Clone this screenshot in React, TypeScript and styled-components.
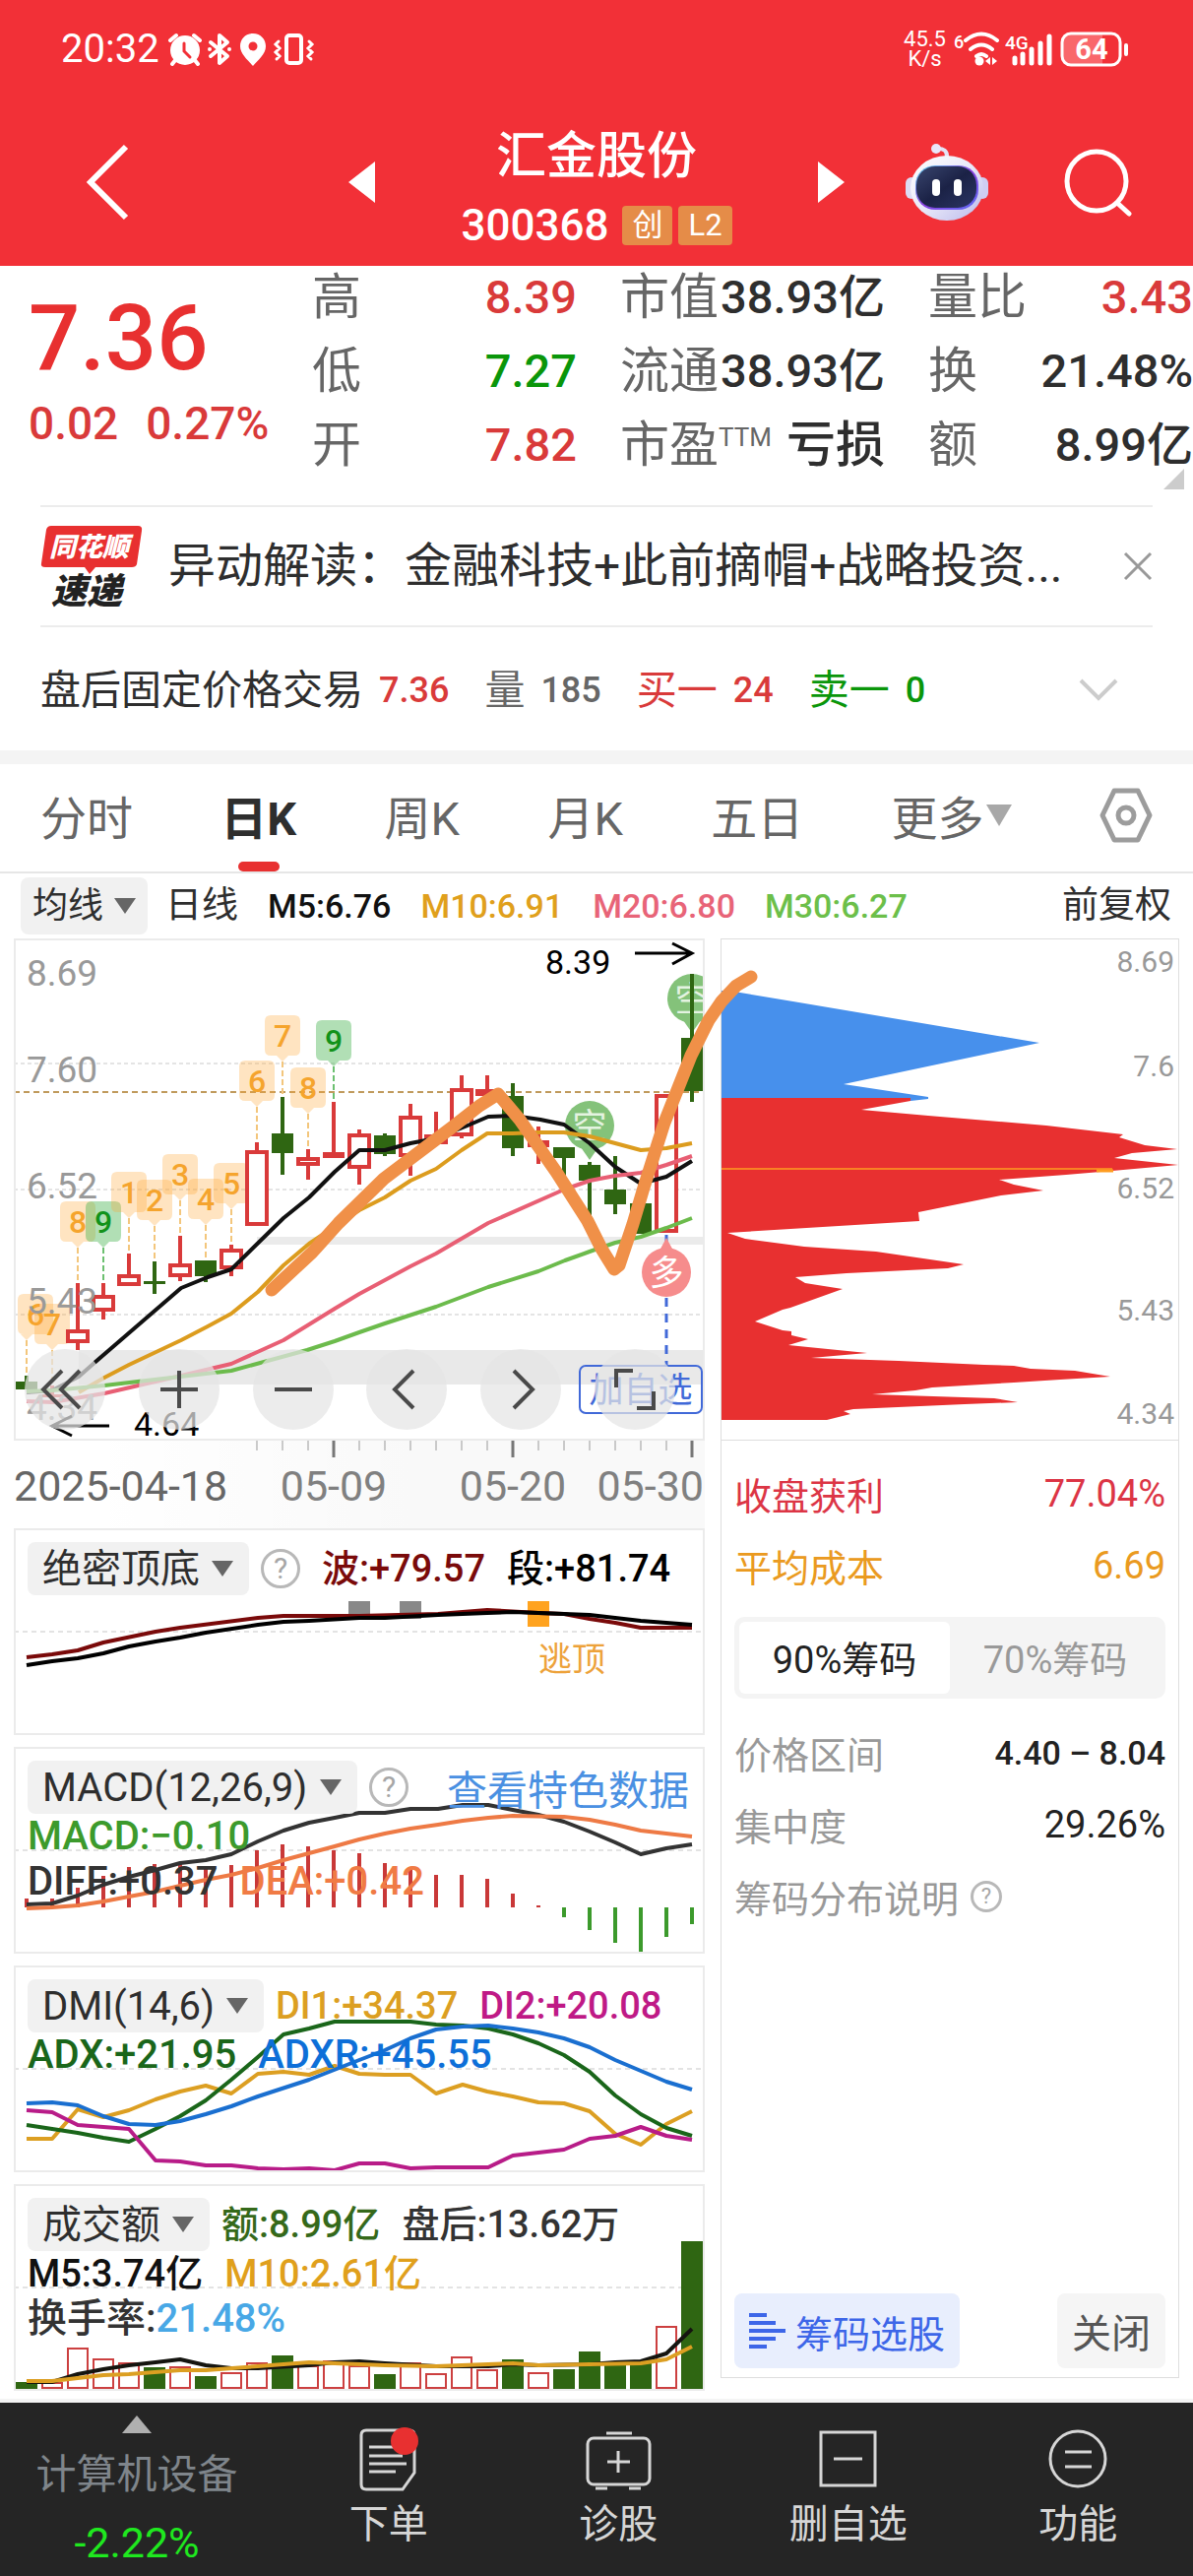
import React, { useState } from 'react';
import styled, { createGlobalStyle } from 'styled-components';

const FONT = "Roboto, 'Noto Sans CJK SC', sans-serif";
const INK = '#2e2e2e';
const GREY = '#666666';
const MUTED = '#999999';
const RED = '#d93a3a';
const GREEN = '#0a960a';
const BAR_GREEN = '#2f6612';

const GlobalStyle = createGlobalStyle`
  *, *::before, *::after { box-sizing: border-box; }
  body { margin: 0; background: #ffffff; font-family: ${FONT}; color: ${INK}; }
  button, select { font: inherit; color: inherit; background: none; border: 0; margin: 0; padding: 0; cursor: pointer; }
  svg { display: block; flex: none; }
  p, h1, h2 { margin: 0; }
`;

const Page = styled.div`
  display: flex;
  flex-direction: column;
  min-width: 1100px;
  white-space: nowrap;
`;

/* ---------- header ---------- */

const Header = styled.header`
  background: #f23037;
  color: #ffffff;
`;

const StatusBar = styled.div`
  display: flex;
  justify-content: space-between;
  align-items: center;
  height: 100px;
  padding: 0 66px 0 62px;
`;

const StatusGroup = styled.div`
  display: flex;
  align-items: center;
  gap: 8px;
`;

const Clock = styled.span`
  font-size: 40px;
  line-height: 44px;
`;

const NetSpeed = styled.span`
  display: flex;
  flex-direction: column;
  align-items: center;
  font-size: 22px;
  line-height: 20px;
`;

const NavBar = styled.nav`
  display: grid;
  grid-template-columns: 1fr 504px 1fr;
  align-items: center;
  height: 170px;
`;

const NavLeft = styled.div`
  display: flex;
  padding-left: 86px;
`;

const NavRight = styled.div`
  display: flex;
  align-items: center;
  justify-content: flex-end;
  gap: 76px;
  padding-right: 62px;
`;

const NavCenter = styled.div`
  display: flex;
  align-items: center;
  justify-content: space-between;
`;

const TitleBlock = styled.div`
  display: flex;
  flex-direction: column;
  align-items: center;
  gap: 18px;
  padding-top: 10px;
`;

const Title = styled.h1`
  font-size: 51px;
  font-weight: 500;
  line-height: 60px;
`;

const CodeRow = styled.div`
  display: flex;
  align-items: center;
  gap: 6px;
`;

const Code = styled.span`
  margin-right: 8px;
  font-size: 44px;
  font-weight: 500;
  line-height: 44px;
`;

const Badge = styled.span`
  padding: 0 10px;
  border-radius: 4px;
  background: #e58c48;
  font-size: 31px;
  line-height: 40px;
`;

/* ---------- quote ---------- */

const Quote = styled.section`
  position: relative;
  display: grid;
  grid-template-columns: 273px 1fr 1fr 1fr;
  column-gap: 44px;
  height: 243px;
  padding-top: 2px;
`;

const PriceBlock = styled.div`
  padding: 22px 0 0 29px;
  color: ${RED};
`;

const Price = styled.p`
  color: #e83030;
  font-size: 92px;
  font-weight: 500;
  line-height: 100px;
`;

const Change = styled.p`
  display: flex;
  gap: 28px;
  margin-top: 4px;
  font-size: 46px;
  font-weight: 500;
  line-height: 64px;
`;

const StatColumn = styled.div`
  display: flex;
  flex-direction: column;
  gap: 15px;
`;

const Stat = styled.div`
  display: flex;
  justify-content: space-between;
  height: 60px;
  font-size: 50px;
  line-height: 60px;
`;

const StatLabel = styled.span`
  color: ${GREY};
  sup { font-size: 26px; line-height: 20px; vertical-align: 16px; }
`;

const StatValue = styled.span<{ $color?: string; $cjk?: boolean }>`
  color: ${(p) => p.$color || INK};
  font-size: ${(p) => (p.$cjk ? 50 : 47)}px;
  font-weight: 500;
`;

const Corner = styled.span`
  position: absolute;
  right: 9px;
  bottom: 16px;
  border-left: 21px solid transparent;
  border-bottom: 21px solid #cccccc;
`;

const News = styled.section`
  display: flex;
  align-items: center;
  height: 124px;
  margin: 0 41px;
  border-top: 2px solid #ececec;
  border-bottom: 2px solid #ececec;
`;

const NewsLink = styled.a`
  flex: 1;
  margin-left: 26px;
  color: ${INK};
  font-size: 48px;
  line-height: 60px;
  text-decoration: none;
`;

const AfterHours = styled.section`
  display: flex;
  align-items: center;
  gap: 36px;
  height: 125px;
  padding: 2px 76px 0 41px;
  font-size: 41px;
  line-height: 60px;
  svg { margin-left: auto; }
`;

const Pair = styled.span<{ $color?: string }>`
  display: flex;
  gap: 16px;
  color: ${(p) => p.$color || INK};
`;

const Num = styled.span<{ $color?: string }>`
  color: ${(p) => p.$color || 'inherit'};
  font-size: 36px;
  font-weight: 500;
`;

const Band = styled.div<{ $height: number }>`
  height: ${(p) => p.$height}px;
  background: #f4f4f4;
`;

/* ---------- tabs ---------- */

const Tabs = styled.div`
  display: flex;
  justify-content: space-between;
  align-items: stretch;
  height: 111px;
  padding: 0 41px;
  border-bottom: 2px solid #e6e6e6;
`;

const Tab = styled.button<{ $active?: boolean }>`
  position: relative;
  display: flex;
  align-items: center;
  gap: 2px;
  padding-bottom: 6px;
  color: ${(p) => (p.$active ? INK : GREY)};
  font-size: 47px;
  font-weight: ${(p) => (p.$active ? 700 : 400)};
  &::after {
    content: '';
    display: ${(p) => (p.$active ? 'block' : 'none')};
    position: absolute;
    bottom: 0;
    left: 50%;
    width: 42px;
    height: 10px;
    margin-left: -21px;
    border-radius: 5px;
    background: #e83030;
  }
`;

const Averages = styled.div`
  display: flex;
  align-items: center;
  gap: 30px;
  height: 66px;
  padding: 0 22px 0 21px;
  font-size: 37px;
  line-height: 58px;
`;

const Average = styled.span<{ $color: string }>`
  color: ${(p) => p.$color};
  font-size: 34px;
  font-weight: 500;
`;

const Lead = styled.span`
  display: flex;
  gap: 18px;
`;

const Restore = styled.button`
  margin-left: auto;
`;

const Picker = styled.label<{ $small?: boolean }>`
  display: flex;
  align-items: center;
  gap: ${(p) => (p.$small ? 10 : 12)}px;
  height: ${(p) => (p.$small ? 58 : 54)}px;
  padding: ${(p) => (p.$small ? '0 12px' : '0 16px 0 15px')};
  border-radius: 8px;
  background: #f1f1f1;
  color: ${INK};
  font-size: ${(p) => (p.$small ? 36 : 40)}px;
  select { appearance: none; }
`;

/* ---------- charts ---------- */

const ChartArea = styled.main`
  position: relative;
  display: grid;
  grid-template-columns: 702fr 466fr;
  gap: 16px;
  padding: 0 14px 8px;
`;

const Stroke = styled.svg`
  position: absolute;
  top: 0;
  left: 0;
  width: 100%;
  height: auto;
  pointer-events: none;
`;

const LeftColumn = styled.div`
  display: flex;
  flex-direction: column;
  min-width: 0;
`;

const Frame = styled.section`
  display: grid;
  border: 2px solid #ebebeb;
  margin-bottom: 12px;
  > * { grid-area: 1 / 1; min-width: 0; }
  &:last-child { margin-bottom: 0; }
`;

const MainFrame = styled(Frame)`
  margin-bottom: 0;
`;

const Plot = styled.svg`
  width: 100%;
  height: auto;
  font-family: ${FONT};
`;

const Toolbar = styled.div`
  position: relative;
  align-self: end;
  display: flex;
  justify-content: space-between;
  padding: 0 28px 9px 9px;
`;

const RoundButton = styled.button`
  display: flex;
  align-items: center;
  justify-content: center;
  width: 82px;
  height: 82px;
  border-radius: 50%;
  background: rgba(229, 229, 229, 0.72);
`;

const Readout = styled.div`
  position: relative;
  padding: 12px 0 0 12px;
`;

const ReadoutHead = styled.div`
  display: flex;
  align-items: center;
  gap: 12px;
  height: 54px;
`;

const Values = styled.div<{ $gap: number; $size?: number }>`
  display: flex;
  gap: ${(p) => p.$gap}px;
  font-size: ${(p) => p.$size || 38}px;
  line-height: 46px;
`;

const Value = styled.span<{ $color: string }>`
  color: ${(p) => p.$color};
  font-weight: 500;
`;

const DataLink = styled.a`
  margin: 0 14px 0 auto;
  color: #4a90e2;
  font-size: 41px;
  text-decoration: none;
`;

const Help = styled.button<{ $size: number }>`
  width: ${(p) => p.$size}px;
  height: ${(p) => p.$size}px;
  margin-right: ${(p) => (p.$size > 36 ? 10 : 0)}px;
  border: 3px solid #b8b8b8;
  border-radius: 50%;
  color: #a6a6a6;
  font-size: ${(p) => (p.$size > 36 ? 30 : 22)}px;
  line-height: 1;
`;

/* ---------- chips ---------- */

const ChipPanel = styled.section`
  display: flex;
  flex-direction: column;
  margin-bottom: 13px;
  border: 1px solid #dedede;
`;

const ChipPlot = styled(Plot)`
  border-bottom: 1px solid #dedede;
`;

const ChipBody = styled.div`
  display: flex;
  flex-direction: column;
  flex: 1;
  padding: 17px 13px 9px;
`;

const ChipRow = styled.div<{ $color?: string }>`
  display: flex;
  align-items: center;
  justify-content: space-between;
  height: 73px;
  color: ${(p) => p.$color || MUTED};
  font-size: 38px;
`;

const ChipValue = styled.span<{ $strong?: boolean; $color?: string }>`
  color: ${(p) => p.$color || 'inherit'};
  font-size: ${(p) => (p.$strong ? 34 : 38)}px;
  font-weight: ${(p) => (p.$strong ? 500 : 400)};
`;

const ChipNote = styled.div`
  display: flex;
  align-items: center;
  gap: 12px;
  height: 73px;
  color: ${MUTED};
  font-size: 38px;
`;

const Segments = styled.div`
  display: grid;
  grid-template-columns: 1fr 1fr;
  height: 83px;
  margin: 16px 0 18px;
  padding: 5px;
  border-radius: 10px;
  background: #f4f4f4;
`;

const Segment = styled.button<{ $active: boolean }>`
  padding-bottom: 3px;
  border-radius: 6px;
  background: ${(p) => (p.$active ? '#ffffff' : 'transparent')};
  color: ${(p) => (p.$active ? '#222222' : MUTED)};
  font-size: 38px;
`;

const ChipFooter = styled.div`
  display: flex;
  justify-content: space-between;
  margin-top: auto;
`;

const FooterButton = styled.button<{ $primary?: boolean }>`
  display: flex;
  align-items: center;
  gap: 10px;
  height: 76px;
  padding: 0 15px;
  border-radius: 8px;
  background: ${(p) => (p.$primary ? '#e8eefd' : '#f5f5f5')};
  color: ${(p) => (p.$primary ? '#3d66e8' : '#555555')};
  font-size: ${(p) => (p.$primary ? 38 : 40)}px;
`;

/* ---------- bottom bar ---------- */

const BottomBar = styled.nav`
  display: grid;
  grid-template-columns: 278px repeat(4, 1fr);
  height: 176px;
  background: #252525;
`;

const IndexLink = styled.a`
  display: flex;
  flex-direction: column;
  align-items: center;
  padding-top: 13px;
  color: #7f858b;
  font-size: 41px;
  line-height: 60px;
  text-decoration: none;
`;

const IndexName = styled.span`
  margin-top: 12px;
`;

const IndexChange = styled.span`
  margin-top: 9px;
  color: #1fe81f;
  font-size: 43px;
`;

const NavItem = styled.button`
  display: flex;
  flex-direction: column;
  align-items: center;
  padding-top: 20px;
  color: #d6d6d6;
  font-size: 40px;
  line-height: 60px;
`;

/* ---------- drawing data ---------- */

type Pt = [number, number];
const line = (pts: Pt[]) => pts.map((p) => p.join(',')).join(' ');
const cx = (i: number) => 27 + i * 26;

// index, bar top, bar bottom, wick top, wick bottom, kind
type Candle = [number, number, number, number, number, 'r' | 'g' | 's'];
const candles: Candle[] = [
  [0, 1403, 1411, 1397, 1411, 'g'],
  [1, 1416, 1419, 1407, 1426, 's'],
  [2, 1350, 1364, 1303, 1371, 'r'],
  [3, 1315, 1332, 1303, 1340, 'r'],
  [4, 1294, 1306, 1273, 1306, 'r'],
  [5, 1301, 1304, 1281, 1314, 'g'],
  [6, 1283, 1297, 1255, 1301, 'r'],
  [7, 1280, 1296, 1280, 1302, 'g'],
  [8, 1268, 1289, 1264, 1296, 'r'],
  [9, 1168, 1245, 1160, 1245, 'r'],
  [10, 1151, 1171, 1114, 1193, 'g'],
  [11, 1175, 1184, 1167, 1198, 'r'],
  [12, 1170, 1176, 1119, 1176, 's'],
  [13, 1151, 1187, 1147, 1203, 'r'],
  [14, 1153, 1172, 1151, 1174, 'g'],
  [15, 1133, 1175, 1121, 1194, 'r'],
  [16, 1152, 1162, 1129, 1162, 'r'],
  [17, 1105, 1154, 1092, 1156, 'r'],
  [18, 1106, 1113, 1092, 1113, 'r'],
  [19, 1113, 1166, 1100, 1174, 'g'],
  [20, 1158, 1165, 1144, 1182, 's'],
  [21, 1165, 1176, 1165, 1196, 'g'],
  [22, 1183, 1199, 1180, 1240, 'g'],
  [23, 1208, 1223, 1174, 1233, 'g'],
  [24, 1222, 1253, 1222, 1253, 'g'],
  [25, 1111, 1252, 1111, 1252, 'r'],
  [26, 1054, 1108, 989, 1119, 'g'],
];

// index, label, high it points to, green?
const tags: [number, string, number, boolean][] = [
  [0, '6', 1397, false],
  [1, '7', 1407, false],
  [2, '8', 1303, false],
  [3, '9', 1303, true],
  [4, '1', 1273, false],
  [5, '2', 1281, false],
  [6, '3', 1255, false],
  [7, '4', 1280, false],
  [8, '5', 1264, false],
  [9, '6', 1160, false],
  [10, '7', 1114, false],
  [11, '8', 1167, false],
  [12, '9', 1119, true],
];

const ma5: Pt[] = [[27, 1414], [53, 1412], [80, 1398], [97, 1383], [184, 1308], [211, 1297], [235, 1289], [288, 1237], [314, 1216], [340, 1190], [365, 1168], [391, 1168], [417, 1161], [443, 1156], [475, 1143], [496, 1134], [521, 1133], [549, 1137], [573, 1142], [599, 1161], [625, 1185], [651, 1202], [677, 1195], [703, 1179]];
const ma10: Pt[] = [[80, 1414], [106, 1399], [131, 1386], [184, 1361], [211, 1347], [235, 1334], [262, 1312], [288, 1285], [314, 1263], [365, 1229], [391, 1216], [417, 1199], [443, 1187], [469, 1168], [495, 1151], [521, 1151], [547, 1150], [573, 1150], [599, 1154], [625, 1161], [651, 1168], [677, 1166], [703, 1161]];
const ma20: Pt[] = [[27, 1423], [53, 1424], [106, 1415], [184, 1397], [235, 1385], [288, 1361], [340, 1329], [365, 1314], [417, 1286], [443, 1273], [496, 1242], [573, 1208], [599, 1199], [625, 1194], [651, 1191], [677, 1183], [703, 1174]];
const ma30: Pt[] = [[27, 1413], [53, 1412], [106, 1407], [140, 1403], [235, 1392], [312, 1371], [340, 1362], [365, 1353], [391, 1344], [443, 1327], [496, 1307], [547, 1291], [574, 1280], [599, 1271], [625, 1262], [651, 1256], [677, 1247], [703, 1237]];

const waveRed: Pt[] = [[27, 1683], [53, 1680], [79, 1676], [105, 1668], [158, 1657], [183, 1653], [262, 1643], [288, 1641], [365, 1641], [445, 1639], [495, 1635], [547, 1638], [573, 1639], [599, 1644], [625, 1648], [651, 1653], [703, 1653]];
const waveBlack: Pt[] = [[27, 1691], [53, 1687], [79, 1684], [105, 1679], [131, 1672], [158, 1667], [183, 1663], [209, 1658], [262, 1650], [288, 1647], [314, 1646], [365, 1643], [391, 1643], [445, 1640], [495, 1638], [521, 1637], [573, 1639], [599, 1640], [625, 1643], [651, 1646], [703, 1650]];

const macdBars = [1928, 1928, 1917, 1905, 1896, 1893, 1893, 1897, 1894, 1879, 1873, 1875, 1879, 1882, 1892, 1896, 1904, 1904, 1908, 1923, 1935, 1947, 1960, 1973, 1983, 1967, 1954];
const diff: Pt[] = [[27, 1934], [53, 1933], [79, 1925], [105, 1914], [131, 1906], [158, 1899], [183, 1892], [209, 1889], [235, 1883], [262, 1870], [288, 1859], [314, 1851], [340, 1846], [365, 1841], [391, 1841], [417, 1837], [445, 1837], [470, 1833], [496, 1833], [521, 1838], [547, 1843], [573, 1850], [599, 1860], [625, 1871], [651, 1883], [677, 1877], [703, 1873]];
const dea: Pt[] = [[27, 1938], [53, 1937], [79, 1935], [105, 1931], [131, 1926], [158, 1921], [183, 1915], [209, 1909], [235, 1904], [262, 1897], [288, 1889], [314, 1882], [340, 1875], [365, 1868], [391, 1862], [417, 1857], [445, 1853], [470, 1849], [496, 1846], [521, 1844], [573, 1845], [599, 1848], [625, 1853], [651, 1859], [703, 1865]];

const di1: Pt[] = [[27, 2172], [53, 2172], [79, 2142], [105, 2150], [131, 2143], [158, 2132], [183, 2124], [209, 2118], [235, 2126], [262, 2106], [288, 2104], [314, 2107], [340, 2098], [365, 2106], [391, 2107], [417, 2107], [443, 2126], [470, 2117], [495, 2124], [521, 2129], [547, 2135], [573, 2136], [599, 2144], [625, 2167], [651, 2178], [677, 2157], [703, 2144]];
const di2: Pt[] = [[27, 2143], [53, 2145], [79, 2158], [105, 2160], [131, 2162], [158, 2194], [183, 2195], [209, 2199], [235, 2199], [262, 2202], [288, 2203], [314, 2202], [340, 2204], [365, 2197], [391, 2197], [417, 2202], [443, 2201], [496, 2201], [521, 2189], [547, 2186], [573, 2183], [599, 2172], [625, 2169], [651, 2160], [677, 2169], [703, 2173]];
const adx: Pt[] = [[27, 2158], [53, 2162], [79, 2166], [105, 2171], [131, 2175], [158, 2162], [183, 2149], [209, 2133], [235, 2112], [262, 2089], [288, 2066], [314, 2060], [340, 2053], [417, 2053], [443, 2056], [470, 2057], [496, 2060], [521, 2066], [547, 2075], [573, 2087], [599, 2104], [625, 2128], [651, 2147], [677, 2161], [703, 2169]];
const adxr: Pt[] = [[27, 2136], [53, 2135], [79, 2138], [105, 2149], [131, 2157], [158, 2158], [183, 2154], [209, 2147], [235, 2139], [262, 2129], [314, 2112], [365, 2092], [391, 2082], [417, 2070], [443, 2061], [470, 2058], [496, 2057], [521, 2060], [547, 2064], [573, 2070], [599, 2079], [625, 2092], [651, 2103], [677, 2114], [703, 2122]];

const volumes: [number, 'r' | 'g'][] = [[2419, 'g'], [2419, 'r'], [2384, 'r'], [2395, 'r'], [2399, 'r'], [2404, 'g'], [2403, 'r'], [2413, 'g'], [2409, 'r'], [2399, 'r'], [2392, 'g'], [2402, 'r'], [2397, 'r'], [2402, 'r'], [2411, 'g'], [2399, 'r'], [2410, 'r'], [2393, 'r'], [2406, 'r'], [2396, 'g'], [2409, 'r'], [2406, 'g'], [2388, 'g'], [2400, 'g'], [2400, 'g'], [2362, 'r'], [2276, 'g']];
const vol5: Pt[] = [[27, 2419], [53, 2419], [79, 2411], [105, 2406], [131, 2402], [158, 2399], [183, 2396], [209, 2402], [235, 2405], [262, 2405], [314, 2402], [340, 2399], [365, 2398], [391, 2400], [443, 2403], [496, 2403], [521, 2401], [547, 2402], [599, 2401], [625, 2399], [651, 2398], [677, 2390], [703, 2365]];
const vol10: Pt[] = [[27, 2418], [53, 2418], [105, 2412], [131, 2411], [183, 2407], [209, 2407], [262, 2403], [314, 2399], [340, 2400], [391, 2402], [443, 2403], [496, 2401], [521, 2400], [547, 2402], [651, 2400], [677, 2396], [703, 2383]];

const profitChips: Pt[] = [[733, 1115], [925, 1115], [925, 1118], [875, 1127], [943, 1133], [1063, 1143], [1141, 1152], [1137, 1155], [1163, 1163], [1196, 1167], [1150, 1171], [1132, 1176], [1197, 1183], [1130, 1189], [1083, 1193], [1015, 1198], [1030, 1203], [1060, 1209], [1017, 1214], [933, 1231], [934, 1240], [739, 1252], [757, 1258], [817, 1266], [890, 1271], [979, 1284], [963, 1288], [860, 1293], [808, 1297], [818, 1303], [856, 1309], [803, 1328], [795, 1330], [767, 1342], [795, 1351], [804, 1352], [804, 1356], [821, 1360], [801, 1366], [881, 1374], [824, 1379], [913, 1382], [1000, 1386], [1030, 1387], [1047, 1390], [1092, 1392], [1128, 1398], [1077, 1401], [1030, 1404], [947, 1409], [930, 1412], [886, 1416], [1010, 1420], [1034, 1424], [980, 1426], [867, 1431], [857, 1433], [864, 1436], [840, 1442], [733, 1442]];
const lossChips: Pt[] = [[733, 1006], [752, 1008], [1056, 1059], [857, 1101], [943, 1114], [943, 1116], [925, 1118], [925, 1115], [733, 1115]];

/* ---------- small drawings ---------- */

const Caret = ({ color = '#666666', w = 22, h = 16 }: { color?: string; w?: number; h?: number }) => (
  <svg width={w} height={h} viewBox="0 0 22 16" preserveAspectRatio="none" aria-hidden="true">
    <path d="M0 0H22L11 16Z" fill={color} />
  </svg>
);

const StatusIcons = () => (
  <svg width="150" height="34" viewBox="0 0 150 34" aria-hidden="true">
    <g fill="none" stroke="#fff" strokeWidth="4" strokeLinecap="round">
      <circle cx="18" cy="18" r="13" fill="#fff" />
      <path d="M3 8 9 3M33 8 27 3M9 27 5 32M27 27 31 32" />
      <path d="M17 11V19L23 25" stroke="#f23037" strokeWidth="3" />
      <path d="M44 10 61 24 53 31V3L61 10 44 24M43 17H43M63 17H63" strokeWidth="4" strokeLinejoin="round" />
      <rect x="121" y="3" width="15" height="28" rx="3" />
      <path d="M113 9 110 12 114 16 110 20 114 24 111 27M144 9 147 12 143 16 147 20 143 24 146 27" strokeWidth="3" />
    </g>
    <path d="M87 1C79 1 74 7 74 14 74 22 82 28 87 34 92 28 100 22 100 14 100 7 95 1 87 1Z" fill="#fff" />
    <circle cx="87" cy="14" r="4.5" fill="#f23037" />
  </svg>
);

const SignalIcons = () => (
  <svg width="177" height="40" viewBox="0 -2 177 40" fontFamily="Roboto, sans-serif" fill="#fff" role="img" aria-label="信号与电量 64">
    <text x="0" y="17" fontSize="18" fontWeight="500">6</text>
    <g fill="none" stroke="#fff" strokeWidth="4" strokeLinecap="round">
      <path d="M12 9Q28-4 44 9M17 18Q28 9 39 18M23 25Q28 21 33 25" />
    </g>
    <circle cx="26" cy="30" r="4.5" />
    <path d="M32 30 37 26V34ZM39 26 44 30 39 34Z" />
    <text x="52" y="18" fontSize="19" fontWeight="500">4G</text>
    <g stroke="#fff" strokeWidth="5" strokeLinecap="round">
      <path d="M62 27V32M70 23V32M79 18V32M88 12V32M97 5V32" />
    </g>
    <path d="M118 3H151V34H118Q110 34 110 26V11Q110 3 118 3Z" fill="#f9676b" />
    <rect x="110" y="2" width="59" height="32" rx="9" fill="none" stroke="#fff" strokeWidth="3" />
    <path d="M175 14V23" stroke="#fff" strokeWidth="4" strokeLinecap="round" />
    <text x="140" y="28" fontSize="29" fontWeight="700" textAnchor="middle">64</text>
  </svg>
);

const Robot = () => (
  <svg width="84" height="78" viewBox="0 0 84 78" role="img" aria-label="智能助手">
    <defs>
      <linearGradient id="shell" x1="0" y1="0" x2="1" y2="1">
        <stop offset="0" stopColor="#ffffff" />
        <stop offset="0.5" stopColor="#e9e9f8" />
        <stop offset="1" stopColor="#b9b8ec" />
      </linearGradient>
      <linearGradient id="visor" x1="0" y1="0" x2="1" y2="1">
        <stop offset="0" stopColor="#5ad6e8" />
        <stop offset="0.5" stopColor="#8a3fe0" />
        <stop offset="1" stopColor="#5b6cf5" />
      </linearGradient>
      <linearGradient id="glass" x1="0" y1="0" x2="1" y2="1">
        <stop offset="0" stopColor="#39456e" />
        <stop offset="0.5" stopColor="#1b2246" />
        <stop offset="1" stopColor="#2b3564" />
      </linearGradient>
    </defs>
    <path d="M42 14Q43 4 31 5" fill="none" stroke="#e4e2f5" strokeWidth="4" />
    <circle cx="31" cy="5" r="5" fill="#e9e7fa" />
    <rect x="0" y="34" width="12" height="22" rx="6" fill="#dcdbf4" />
    <rect x="72" y="34" width="12" height="22" rx="6" fill="#cfcdf2" />
    <ellipse cx="42" cy="45" rx="37" ry="33" fill="url(#shell)" />
    <rect x="10" y="22" width="64" height="45" rx="20" fill="url(#visor)" />
    <rect x="11" y="23" width="61" height="42" rx="19" fill="url(#glass)" />
    <rect x="27" y="36" width="8" height="17" rx="4" fill="#fff" />
    <rect x="49" y="36" width="8" height="17" rx="4" fill="#fff" />
  </svg>
);

const Gear = () => (
  <svg width="54" height="56" viewBox="0 0 54 56" fill="none" stroke="#9c9c9c" strokeWidth="5" strokeLinejoin="round" role="img" aria-label="设置">
    <path d="M15 3H39L51 28 39 53H15L3 28Z" />
    <circle cx="27" cy="28" r="8" />
  </svg>
);

const NewsLogo = () => (
  <svg width="104" height="92" viewBox="0 -4 104 92" role="img" aria-label="同花顺速递">
    <path d="M11 1H99Q104 1 103 6L98 40Q97 43 93 43H56L50 50 45 43H5Q0 43 1 39L6 5Q7 1 11 1Z" fill="#e83030" />
    <g fontFamily="'Noto Sans CJK SC', sans-serif" fontWeight="900" fontStyle="italic">
      <text x="9" y="32" fontSize="27" fill="#fff">同花顺</text>
      <text x="11" y="80" fontSize="36" fill="#222">速递</text>
    </g>
  </svg>
);

const Grid = ({ y }: { y: number }) => (
  <path d={`M14 ${y}H716`} stroke="#e3e3e3" strokeWidth="2" strokeDasharray="5 4" />
);

const Curve = ({ pts, color, w = 4 }: { pts: Pt[]; color: string; w?: number }) => (
  <polyline points={line(pts)} fill="none" stroke={color} strokeWidth={w} strokeLinejoin="round" />
);

const Tag = ({ i, label, high, green }: { i: number; label: string; high: number; green: boolean }) => {
  const x = cx(i);
  const mid = i === 0 ? 36 : x;
  const top = high - 83;
  return (
    <g>
      <path d={`M${x} ${top + 47}V${high}`} stroke={green ? '#6cc070' : '#f3c67c'} strokeWidth="2" strokeDasharray="6 3" />
      <path
        d={`M${mid - 12} ${top}H${mid + 12}Q${mid + 18} ${top} ${mid + 18} ${top + 6}V${top + 35}Q${mid + 18} ${top + 41} ${mid + 12} ${top + 41}H${x + 6}L${x} ${top + 47} ${x - 6} ${top + 41}H${mid - 12}Q${mid - 18} ${top + 41} ${mid - 18} ${top + 35}V${top + 6}Q${mid - 18} ${top} ${mid - 12} ${top}Z`}
        fill={green ? 'rgba(60,175,70,0.4)' : 'rgba(255,165,50,0.3)'}
      />
      <text x={mid} y={top + 32} fontSize="32" fontWeight="500" textAnchor="middle" fill={green ? '#12921a' : '#f5a42d'}>
        {label}
      </text>
    </g>
  );
};

const Bubble = ({ x, y, label }: { x: number; y: number; label: string }) => (
  <g>
    <path d={`M${x - 9} ${y + 22}L${x} ${y + 35} ${x + 9} ${y + 22}Z`} fill="#84c27a" />
    <circle cx={x} cy={y} r="25" fill="#84c27a" />
    <text x={x} y={y + 13} fontSize="35" textAnchor="middle" fill="#e4f3e1">{label}</text>
  </g>
);

const CandlePlot = () => (
  <Plot viewBox="16 955 698 506" role="img" aria-label="日K线图">
    <path d="M14 1080H716M14 1208H716M14 1335H716" stroke="#dcdcdc" strokeWidth="1.5" strokeDasharray="4 3" />
    <path d="M14 1109H716" stroke="#c09a5c" strokeWidth="2" strokeDasharray="6 4" />
    <rect x="261" y="1256" width="455" height="8" fill="#ebebeb" />
    <rect x="80" y="1371" width="636" height="35" fill="#e9e9e9" />
    {tags.map(([i, label, high, green]) => (
      <Tag key={i} i={i} label={label} high={high} green={green} />
    ))}
    <Bubble x={599} y={1143} label="空" />
    <Bubble x={703} y={1014} label="空" />
    {candles.map(([i, t, b, h, l, kind]) => {
      const x = cx(i);
      const c = kind === 'g' ? BAR_GREEN : RED;
      return (
        <g key={i}>
          <path d={`M${x} ${h}V${l}`} stroke={c} strokeWidth="4" />
          {kind === 'r' ? (
            <rect x={x - 10} y={t + 2} width="20" height={Math.max(b - t - 4, 2)} fill="#fff" stroke={c} strokeWidth="4" />
          ) : (
            <rect x={x - 11} y={t} width="22" height={b - t} fill={c} />
          )}
        </g>
      );
    })}
    <Curve pts={ma5} color="#111111" />
    <Curve pts={ma10} color="#dc9c1e" />
    <Curve pts={ma20} color="#e85f74" />
    <Curve pts={ma30} color="#6cbb4c" />
    <g fontSize="37" fill={MUTED}>
      <text x="27" y="1001">8.69</text>
      <text x="27" y="1099">7.60</text>
      <text x="27" y="1217">6.52</text>
      <text x="27" y="1334">5.43</text>
      <text x="27" y="1442">4.34</text>
    </g>
    <g fill="none" stroke="#000" strokeWidth="3">
      <path d="M645 968H702M683 958 703 968 683 979" />
      <path d="M111 1448H54M73 1438 53 1448 73 1458" />
    </g>
    <text x="554" y="989" fontSize="34" fill="#000">8.39</text>
    <text x="136" y="1458" fontSize="34" fill="#000">4.64</text>
    <path d="M677 1254V1387" stroke="#4169d8" strokeWidth="3" strokeDasharray="9 7" />
    <path d="M670 1270 677 1257 684 1270Z" fill="#f68c8c" />
    <circle cx="677" cy="1292" r="25" fill="#f68c8c" />
    <text x="677" y="1305" fontSize="35" textAnchor="middle" fill="#fff">多</text>
    <rect x="589" y="1387" width="124" height="48" rx="6" fill="none" stroke="#4169d8" strokeWidth="2" />
    <text x="651" y="1424" fontSize="35" textAnchor="middle" fill="#4169d8">加自选</text>
  </Plot>
);

const AxisPlot = () => (
  <Plot viewBox="14 1463 702 89" role="img" aria-label="日期">
    <defs>
      <linearGradient id="shade" x1="0" x2="1">
        <stop offset="0.1" stopColor="#000" stopOpacity="0" />
        <stop offset="0.6" stopColor="#000" stopOpacity="0.025" />
      </linearGradient>
    </defs>
    <rect x="14" y="1463" width="702" height="89" fill="url(#shade)" />
    {Array.from({ length: 18 }, (_, k) => k + 9).map((i) => {
      const big = i === 12 || i === 19 || i === 26;
      return <path key={i} d={`M${cx(i)} 1463V${big ? 1480 : 1473}`} stroke={big ? '#777' : '#999'} strokeWidth={big ? 3 : 1} />;
    })}
    <g fontSize="43" fill={GREY}>
      <text x="14" y="1524">2025-04-18</text>
      <g fill="#808080">
        <text x="339" y="1524" textAnchor="middle">05-09</text>
        <text x="521" y="1524" textAnchor="middle">05-20</text>
        <text x="715" y="1524" textAnchor="end">05-30</text>
      </g>
    </g>
  </Plot>
);

const toolIcons: [string, string][] = [
  ['最早', 'M38 22 19 41 38 60M56 22 37 41 56 60'],
  ['放大', 'M41 22V60M22 41H60'],
  ['缩小', 'M22 41H60'],
  ['向左', 'M48 22 29 41 48 60'],
  ['向右', 'M34 22 53 41 34 60'],
  ['全屏', 'M22 39V22H39M43 60H60V43'],
];

const IndicatorPicker = ({ name }: { name: string }) => (
  <Picker>
    <select aria-label="指标">
      <option>{name}</option>
    </select>
    <Caret />
  </Picker>
);

const bottomItems: { label: string; icon: React.ReactNode }[] = [
  {
    label: '下单',
    icon: (
      <>
        <path d="M9 8H53Q58 8 58 13V51L46 68H9Q4 68 4 63V13Q4 8 9 8ZM12 25H38M12 34H46M12 42H50M12 50H39" />
        <circle cx="48" cy="19" r="14" fill="#e83030" stroke="none" />
      </>
    ),
  },
  {
    label: '诊股',
    icon: (
      <>
        <rect x="0" y="16" width="63" height="47" rx="6" />
        <path d="M19 11H45M8 67H20M42 67H54M31 29V51M20 40H43" />
      </>
    ),
  },
  { label: '删自选', icon: <path d="M4 10H59V64H4ZM17 37H46" /> },
  {
    label: '功能',
    icon: (
      <>
        <circle cx="31" cy="37" r="28" />
        <path d="M18 30H45M18 45H45" />
      </>
    ),
  },
];

export default function App() {
  const [tab, setTab] = useState('日K');
  const [range, setRange] = useState('90%筹码');

  return (
    <Page>
      <GlobalStyle />
      <Header>
        <StatusBar>
          <StatusGroup>
            <Clock>20:32</Clock>
            <StatusIcons />
          </StatusGroup>
          <StatusGroup>
            <NetSpeed><span>45.5</span><span>K/s</span></NetSpeed>
            <SignalIcons />
          </StatusGroup>
        </StatusBar>
        <NavBar>
          <NavLeft>
            <button aria-label="返回">
              <svg width="46" height="78" viewBox="0 0 46 78" fill="none" stroke="#fff" strokeWidth="6">
                <path d="M42 3 6 39 42 75" />
              </svg>
            </button>
          </NavLeft>
          <NavCenter>
            <button aria-label="上一只">
              <svg width="27" height="42" viewBox="0 0 27 42"><path d="M27 0V42L0 21Z" fill="#fff" /></svg>
            </button>
            <TitleBlock>
              <Title>汇金股份</Title>
              <CodeRow>
                <Code>300368</Code>
                <Badge>创</Badge>
                <Badge>L2</Badge>
              </CodeRow>
            </TitleBlock>
            <button aria-label="下一只">
              <svg width="27" height="42" viewBox="0 0 27 42"><path d="M0 0V42L27 21Z" fill="#fff" /></svg>
            </button>
          </NavCenter>
          <NavRight>
            <button aria-label="助手"><Robot /></button>
            <button aria-label="搜索">
              <svg width="70" height="70" viewBox="0 0 70 70" fill="none" stroke="#fff" strokeWidth="5" strokeLinecap="round">
                <circle cx="34" cy="34" r="30" />
                <path d="M55 56 67 67" />
              </svg>
            </button>
          </NavRight>
        </NavBar>
      </Header>

      <Quote>
        <PriceBlock>
          <Price>7.36</Price>
          <Change><span>0.02</span><span>0.27%</span></Change>
        </PriceBlock>
        <StatColumn>
          <Stat><StatLabel>高</StatLabel><StatValue $color={RED}>8.39</StatValue></Stat>
          <Stat><StatLabel>低</StatLabel><StatValue $color={GREEN}>7.27</StatValue></Stat>
          <Stat><StatLabel>开</StatLabel><StatValue $color={RED}>7.82</StatValue></Stat>
        </StatColumn>
        <StatColumn>
          <Stat><StatLabel>市值</StatLabel><StatValue>38.93亿</StatValue></Stat>
          <Stat><StatLabel>流通</StatLabel><StatValue>38.93亿</StatValue></Stat>
          <Stat><StatLabel>市盈<sup>TTM</sup></StatLabel><StatValue $cjk>亏损</StatValue></Stat>
        </StatColumn>
        <StatColumn>
          <Stat><StatLabel>量比</StatLabel><StatValue $color={RED}>3.43</StatValue></Stat>
          <Stat><StatLabel>换</StatLabel><StatValue>21.48%</StatValue></Stat>
          <Stat><StatLabel>额</StatLabel><StatValue>8.99亿</StatValue></Stat>
        </StatColumn>
        <Corner />
      </Quote>

      <News>
        <NewsLogo />
        <NewsLink href="#news">异动解读：金融科技+此前摘帽+战略投资...</NewsLink>
        <button aria-label="关闭">
          <svg width="30" height="30" viewBox="0 0 30 30" stroke="#999" strokeWidth="3"><path d="M2 2 28 28M28 2 2 28" /></svg>
        </button>
      </News>

      <AfterHours>
        <Pair>盘后固定价格交易<Num $color={RED}>7.36</Num></Pair>
        <Pair $color={GREY}>量<Num>185</Num></Pair>
        <Pair $color={RED}>买一<Num>24</Num></Pair>
        <Pair $color={GREEN}>卖一<Num>0</Num></Pair>
        <svg width="40" height="24" viewBox="0 0 40 24" fill="none" stroke="#ccc" strokeWidth="4"><path d="M2 2 20 20 38 2" /></svg>
      </AfterHours>

      <Band $height={14} />

      <Tabs>
        {['分时', '日K', '周K', '月K', '五日'].map((t) => (
          <Tab key={t} $active={t === tab} onClick={() => setTab(t)}>{t}</Tab>
        ))}
        <Tab>更多<Caret color="#a8a8a8" w={26} h={22} /></Tab>
        <Tab aria-label="设置"><Gear /></Tab>
      </Tabs>

      <Averages>
        <Lead>
          <Picker $small>
            <select aria-label="主图指标"><option>均线</option></select>
            <Caret />
          </Picker>
          <span>日线</span>
        </Lead>
        <Average $color="#111111">M5:6.76</Average>
        <Average $color="#e0a01c">M10:6.91</Average>
        <Average $color="#e86478">M20:6.80</Average>
        <Average $color="#6cbf4a">M30:6.27</Average>
        <Restore>前复权</Restore>
      </Averages>

      <ChartArea>
        <LeftColumn>
          <MainFrame>
            <CandlePlot />
            <Toolbar>
              {toolIcons.map(([label, d]) => (
                <RoundButton key={label} aria-label={label}>
                  <svg width="82" height="82" viewBox="0 0 82 82" fill="none" stroke="#4a4a4a" strokeWidth="4"><path d={d} /></svg>
                </RoundButton>
              ))}
            </Toolbar>
          </MainFrame>
          <AxisPlot />

          <Frame>
            <Plot viewBox="16 1554 698 206" aria-hidden="true">
              <Grid y={1657} />
              <path d="M354 1626H376V1644H354ZM406 1626H428V1644H406Z" fill="#888" />
              <path d="M536 1626H558V1652H536Z" fill="#ffa31f" />
              <Curve pts={waveRed} color="#7a0a0a" />
              <Curve pts={waveBlack} color="#000000" />
              <text x="547" y="1697" fontSize="34" fill="#eda23a">逃顶</text>
            </Plot>
            <Readout>
              <ReadoutHead>
                <IndicatorPicker name="绝密顶底" />
                <Help $size={40} aria-label="说明">?</Help>
                <Values $gap={22}>
                  <Value $color="#7a0a0a">波:+79.57</Value>
                  <Value $color="#000000">段:+81.74</Value>
                </Values>
              </ReadoutHead>
            </Readout>
          </Frame>

          <Frame>
            <Plot viewBox="16 1776 698 206" aria-hidden="true">
              <Grid y={1879} />
              {macdBars.map((y, i) => (
                <path key={i} d={`M${cx(i)} 1937V${y}`} stroke={i < 21 ? '#c93838' : '#3c9a2c'} strokeWidth="4" />
              ))}
              <Curve pts={diff} color="#333333" />
              <Curve pts={dea} color="#ee7a45" />
            </Plot>
            <Readout>
              <ReadoutHead>
                <IndicatorPicker name="MACD(12,26,9)" />
                <Help $size={40} aria-label="说明">?</Help>
                <DataLink href="#data">查看特色数据</DataLink>
              </ReadoutHead>
              <Values $gap={22} $size={40}>
                <Value $color="#3c9a2c">MACD:−0.10</Value>
              </Values>
              <Values $gap={22} $size={40}>
                <Value $color="#333333">DIFF:+0.37</Value>
                <Value $color="#f07b45">DEA:+0.42</Value>
              </Values>
            </Readout>
          </Frame>

          <Frame>
            <Plot viewBox="16 1998 698 206" aria-hidden="true">
              <Grid y={2101} />
              <Curve pts={di1} color="#dc9f22" />
              <Curve pts={adx} color="#1a661a" />
              <Curve pts={adxr} color="#1a6fd0" />
              <Curve pts={di2} color="#b81c88" />
            </Plot>
            <Readout>
              <ReadoutHead>
                <IndicatorPicker name="DMI(14,6)" />
                <Values $gap={22}>
                  <Value $color="#dc9f22">DI1:+34.37</Value>
                  <Value $color="#bf1a86">DI2:+20.08</Value>
                </Values>
              </ReadoutHead>
              <Values $gap={22} $size={40}>
                <Value $color="#1a661a">ADX:+21.95</Value>
                <Value $color="#0d6fd8">ADXR:+45.55</Value>
              </Values>
            </Readout>
          </Frame>

          <Frame>
            <Plot viewBox="16 2220 698 206" aria-hidden="true">
              <Grid y={2323} />
              {volumes.map(([y, kind], i) =>
                kind === 'g' ? (
                  <rect key={i} x={cx(i) - 11} y={y} width="22" height={2428 - y} fill={BAR_GREEN} />
                ) : (
                  <rect key={i} x={cx(i) - 10} y={y + 1} width="20" height={2424 - y} fill="#fff" stroke="#cc4040" strokeWidth="2" />
                ),
              )}
              <Curve pts={vol5} color="#151510" />
              <Curve pts={vol10} color="#dc9f22" />
            </Plot>
            <Readout>
              <ReadoutHead>
                <IndicatorPicker name="成交额" />
                <Values $gap={22}>
                  <Value $color="#35691a">额:8.99亿</Value>
                  <Value $color="#333333">盘后:13.62万</Value>
                </Values>
              </ReadoutHead>
              <Values $gap={22}>
                <Value $color="#111111">M5:3.74亿</Value>
                <Value $color="#e0a01c">M10:2.61亿</Value>
              </Values>
              <Values $gap={0} $size={40}>
                <Value $color="#333333">换手率:</Value>
                <Value $color="#48a8e6">21.48%</Value>
              </Values>
            </Readout>
          </Frame>
        </LeftColumn>

        <ChipPanel>
          <ChipPlot viewBox="733 954 464 508" role="img" aria-label="筹码分布">
            <polygon points={line(lossChips)} fill="#4790ec" />
            <polygon points={line(profitChips)} fill="#e83030" />
            <path d="M733 1187H1130" stroke="#ff9c20" strokeWidth="1.5" />
            <path d="M1114 1189H1131" stroke="#ff9c20" strokeWidth="3" />
            <g fontSize="30" fill={MUTED} textAnchor="end">
              <text x="1193" y="987">8.69</text>
              <text x="1193" y="1093">7.6</text>
              <text x="1193" y="1217">6.52</text>
              <text x="1193" y="1341">5.43</text>
              <text x="1193" y="1446">4.34</text>
            </g>
          </ChipPlot>
          <ChipBody>
            <ChipRow $color="#dc3545"><span>收盘获利</span><ChipValue>77.04%</ChipValue></ChipRow>
            <ChipRow $color="#ea9a20"><span>平均成本</span><ChipValue>6.69</ChipValue></ChipRow>
            <Segments>
              {['90%筹码', '70%筹码'].map((s) => (
                <Segment key={s} $active={s === range} onClick={() => setRange(s)}>{s}</Segment>
              ))}
            </Segments>
            <ChipRow><span>价格区间</span><ChipValue $strong $color="#222222">4.40 – 8.04</ChipValue></ChipRow>
            <ChipRow><span>集中度</span><ChipValue $color="#222222">29.26%</ChipValue></ChipRow>
            <ChipNote>筹码分布说明<Help $size={32} aria-label="说明">?</Help></ChipNote>
            <ChipFooter>
              <FooterButton $primary>
                <svg width="37" height="36" viewBox="0 0 37 36" stroke="#3d66e8" strokeWidth="4">
                  <path d="M0 2H18M0 10H27M0 18H37M0 26H27M0 34H18" />
                </svg>
                筹码选股
              </FooterButton>
              <FooterButton>关闭</FooterButton>
            </ChipFooter>
          </ChipBody>
        </ChipPanel>

        <Stroke viewBox="0 953 1212 400" aria-hidden="true">
          <path
            d="M276 1310 317 1272 344 1242 390 1197 459 1145 487 1123 506 1111 528 1137 565 1190 597 1240 611 1268 624 1289 629 1285 643 1243 654 1206 675 1140 702 1072 720 1036 733 1017 748 1001 763 992"
            fill="none"
            stroke="#f09048"
            strokeWidth="13"
            strokeLinecap="round"
            strokeLinejoin="round"
          />
        </Stroke>
      </ChartArea>

      <Band $height={4} />

      <BottomBar>
        <IndexLink href="#index">
          <svg width="30" height="18" viewBox="0 0 30 18"><path d="M15 0 30 18H0Z" fill="#b0b0b0" /></svg>
          <IndexName>计算机设备</IndexName>
          <IndexChange>-2.22%</IndexChange>
        </IndexLink>
        {bottomItems.map((item) => (
          <NavItem key={item.label}>
            <svg width="63" height="74" viewBox="0 0 63 74" fill="none" stroke="#d6d6d6" strokeWidth="3" overflow="visible" aria-hidden="true">
              {item.icon}
            </svg>
            {item.label}
          </NavItem>
        ))}
      </BottomBar>
    </Page>
  );
}
